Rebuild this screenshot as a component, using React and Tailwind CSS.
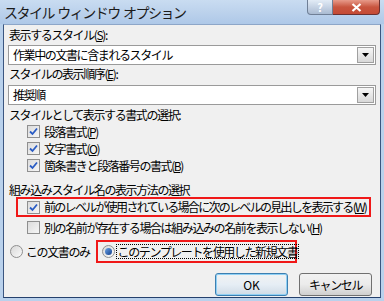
import React from "react";

const jp = { fontFamily: '"Noto Sans CJK JP", "Noto Sans", sans-serif' };

function Check({ checked }) {
  return (
    <span className="flex h-[13px] w-[13px] shrink-0 items-center justify-center border border-[#8f8f8f] bg-gradient-to-br from-[#dcdcdc] to-[#f6f6f6]">
      {checked && (
        <svg width="9" height="9" viewBox="0 0 9 9">
          <path d="M1 4.5 L3.5 7 L8 1.5" fill="none" stroke="#2a5cc4" strokeWidth="1.8" />
        </svg>
      )}
    </span>
  );
}

function Radio({ checked }) {
  return (
    <span className="flex h-[13px] w-[13px] shrink-0 items-center justify-center rounded-full border border-[#8f8f8f] bg-gradient-to-br from-[#d8d8d8] to-[#fafafa]">
      {checked && <span className="h-[7px] w-[7px] rounded-full bg-gradient-to-br from-[#6fa4e6] to-[#103f8c]" />}
    </span>
  );
}

function Select({ value }) {
  return (
    <div className="mx-[4px] flex h-[20px] items-center border border-[#9a9a9a] bg-white pl-[4px]">
      <span className="flex-1 whitespace-nowrap text-[12px] leading-[14px] tracking-[-1.4px] text-black">{value}</span>
      <span className="mr-[1px] flex h-[16px] w-[17px] items-center justify-center border border-[#a0a0a0] bg-gradient-to-b from-[#f6f6f6] to-[#d8d8d8]">
        <svg width="7" height="4" viewBox="0 0 7 4">
          <path d="M0 0 H7 L3.5 4 Z" fill="#000" />
        </svg>
      </span>
    </div>
  );
}

function Label({ children, className = "" }) {
  return (
    <div className={"whitespace-nowrap pl-[5px] text-[12px] leading-[14px] tracking-[-1.4px] text-black " + className}>
      {children}
    </div>
  );
}

function Row({ checked, children, inset = false, className = "" }) {
  return (
    <div
      className={
        "flex h-[17px] items-center gap-[4px] whitespace-nowrap text-[12px] leading-[14px] text-black " +
        (inset ? "pl-[9px] " : "pl-[23px] ") +
        className
      }
    >
      <Check checked={checked} />
      <span className={inset ? "tracking-[-1.7px]" : "tracking-[-1.4px]"}>{children}</span>
    </div>
  );
}

export default function App() {
  return (
    <div className="h-[301px] w-[384px] overflow-hidden bg-[#b9d1ec]" style={jp}>
      {/* Title bar */}
      <div className="flex h-[24px] items-start justify-between bg-gradient-to-b from-[#c9dcf1] via-[#bcd2ec] to-[#aec8e8]">
        <span className="whitespace-pre pl-[4px] pt-[4px] text-[14px] leading-[16px] tracking-[-1.5px] text-[#1b1b1b]">
          スタイル  ウィンドウ  オプション
        </span>
        <div className="mr-[4px] flex h-[15px] shrink-0">
          <span className="flex w-[26px] items-center justify-center rounded-bl-[4px] border border-t-0 border-[#6f7f96] bg-gradient-to-b from-[#e2ebf6] to-[#aabbd2] text-[11px] font-bold leading-[12px] text-white">
            ?
          </span>
          <span className="flex w-[47px] items-center justify-center rounded-br-[4px] border border-l-0 border-t-0 border-[#6b3030] bg-gradient-to-b from-[#e79a8a] via-[#c8553f] to-[#c54a35]">
            <svg width="11" height="9" viewBox="0 0 11 9">
              <path d="M1.5 1 L9.5 8 M9.5 1 L1.5 8" stroke="#fff" strokeWidth="2.2" />
            </svg>
          </span>
        </div>
      </div>

      {/* Body */}
      <div className="mx-[3px] h-[274px] border border-t-[#8da6c8] border-x-[#3b5680] border-b-[#24406d] bg-[#f0f0f0]">
        <Label className="pt-[3px]">
          表示するスタイル(<u>S</u>):
        </Label>
        <div className="mt-[3px]">
          <Select value="作業中の文書に含まれるスタイル" />
        </div>
        <Label className="mt-[2px]">
          スタイルの表示順序(<u>E</u>):
        </Label>
        <div className="mt-[4px]">
          <Select value="推奨順" />
        </div>
        <Label className="mt-[3px]">スタイルとして表示する書式の選択:</Label>
        <div className="mt-[1px]">
          <Row checked>
            段落書式(<u>P</u>)
          </Row>
          <Row checked>
            文字書式(<u>O</u>)
          </Row>
          <Row checked>
            箇条書きと段落番号の書式(<u>B</u>)
          </Row>
        </div>
        <Label className="mt-[9px]">組み込みスタイル名の表示方法の選択</Label>
        <div className="ml-[12px] mr-[9px] flex h-[20px] items-center border-2 border-[#f01818]">
          <Row checked inset>
            前のレベルが使用されている場合に次のレベルの見出しを表示する(<u>W</u>)
          </Row>
        </div>
        <Row className="mt-[2px]">
          別の名前が存在する場合は組み込みの名前を表示しない(<u>H</u>)
        </Row>
        <div className="mt-[4px] flex h-[23px] items-center whitespace-nowrap text-[12px] leading-[14px] tracking-[-1.4px] text-black">
          <div className="flex items-center gap-[3px] pl-[6px]">
            <Radio />
            <span>この文書のみ</span>
          </div>
          <div className="ml-[6px] flex h-[23px] w-[201px] items-center gap-[1px] border-2 border-[#f01818] pl-[4px]">
            <Radio checked />
            <span className="border border-dotted border-black px-[1px] leading-[13px]">このテンプレートを使用した新規文書</span>
          </div>
        </div>
        <div className="mt-[10px] flex justify-end gap-[11px] pr-[8px]">
          <button className="h-[23px] w-[73px] rounded-[3px] border border-[#3c7fb1] bg-gradient-to-b from-[#f2f2f2] via-[#e6eef5] to-[#cfdbe6] text-[12px] leading-none text-black shadow-[inset_0_0_0_1px_#8fd0f5]">
            OK
          </button>
          <button className="h-[23px] w-[73px] rounded-[3px] border border-[#707070] bg-gradient-to-b from-[#f2f2f2] via-[#ebebeb] to-[#cfcfcf] text-[12px] leading-none tracking-[-1.4px] text-black">
            キャンセル
          </button>
        </div>
      </div>
    </div>
  );
}
